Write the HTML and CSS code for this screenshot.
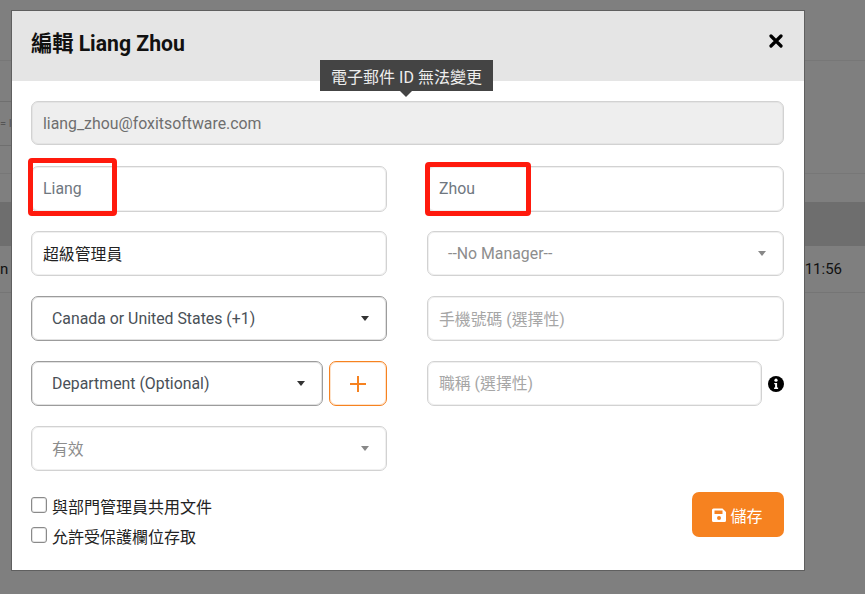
FILE: index.html
```html
<!DOCTYPE html>
<html lang="zh-Hant">
<head>
<meta charset="utf-8">
<title>編輯 Liang Zhou</title>
<link rel="stylesheet" href="styles.css">
</head>
<body>
<div class="backdrop">
  <div class="bg-row bg-r1"></div>
  <div class="bg-filter"><span>= I</span></div>
  <div class="bg-row bg-r4"></div>
  <div class="bg-head"></div>
  <div class="bg-row bg-r5"><span>n</span><span class="bg-time">11:56</span></div>
</div>

<div class="modal">
  <header class="modal-head">
    <h1>編輯 Liang Zhou</h1>
    <svg class="close" viewBox="0 0 14 14" width="14" height="14"><path d="M2 2 12 12M12 2 2 12" stroke="#000" stroke-width="3.2" stroke-linecap="round"/></svg>
  </header>
  <div class="modal-body">
    <div class="field disabled email">liang_zhou@foxitsoftware.com</div>
    <div class="grid">
      <div class="field muted-text lift">Liang</div>
      <div class="field muted-text lift">Zhou</div>

      <div class="field dark-text lift-half">超級管理員</div>
      <div class="field soft-text manager">--No Manager--<i class="caret soft"></i></div>

      <div class="field select strong">Canada or United States (+1)<i class="caret"></i></div>
      <div class="field placeholder lift-half">手機號碼 (選擇性)</div>

      <div class="pair">
        <div class="field select strong grow">Department (Optional)<i class="caret"></i></div>
        <button class="plus" type="button"><svg viewBox="0 0 16 16" width="16" height="16"><path d="M8 0v16M0 8h16" stroke="#f68220" stroke-width="2"/></svg></button>
      </div>
      <div class="pair">
        <div class="field placeholder grow lift">職稱 (選擇性)</div>
        <svg class="info" viewBox="0 0 16 16" width="16" height="16"><circle cx="8" cy="8" r="8" fill="#000"/><circle cx="8" cy="4.2" r="1.6" fill="#fff"/><path d="M6.2 6.9h2.9v4.6h1v1.4H6.1v-1.4h1V8.3h-.9z" fill="#fff"/></svg>
      </div>

      <div class="field select soft-text status">有效<i class="caret soft"></i></div>
    </div>

    <div class="foot">
      <div class="checks">
        <label class="check"><span class="box"></span>與部門管理員共用文件</label>
        <label class="check"><span class="box"></span>允許受保護欄位存取</label>
      </div>
      <button class="save" type="button">
        <svg viewBox="0 0 16 16" width="16" height="16"><path fill-rule="evenodd" d="M2.500 1.500h9L15 5v8.500a1.500 1.500 0 0 1-1.500 1.500h-11A1.500 1.500 0 0 1 1 13.500v-10.500a1.500 1.500 0 0 1 1.500-1.500zM3.500 3.500v3.500h8v-3.500zM8 9a2 2 0 1 0 0 4 2 2 0 0 0 0-4z" fill="#fff"/></svg>
        <span>儲存</span>
      </button>
    </div>
  </div>
</div>

<div class="tooltip">電子郵件 ID 無法變更</div>
<div class="mark mark-left"></div>
<div class="mark mark-right"></div>
</body>
</html>
```

FILE: styles.css
```css
* { box-sizing: border-box; }
html, body { margin: 0; height: 100%; }
body {
  position: relative;
  width: 865px;
  height: 594px;
  overflow: hidden;
  background: #7f7f7f;
  font-family: Roboto, "Noto Sans CJK TC", sans-serif;
  font-size: 15.85px;
}

/* dimmed page behind the dialog */
.backdrop { display: flex; flex-direction: column; height: 100%; padding-top: 60px; color: #111; }
.bg-row { display: flex; align-items: center; justify-content: space-between; font-size: 15px; }
.bg-r1 { height: 41px; border-top: 1px solid #777; }
.bg-filter {
  width: 30px;
  height: 45px;
  border-top: 1px solid #6f6f6f;
  border-bottom: 1px solid #6f6f6f;
  display: flex;
  align-items: center;
  font-size: 11px;
  color: #555;
}
.bg-r4 { height: 56px; margin-top: 27px; border-top: 1px solid #777; margin-bottom: -27px; }
.bg-head { height: 44px; background: #6e6e6e; }
.bg-r5 { height: 47px; border-bottom: 1px solid #757575; }
.bg-time { margin-right: 23px; }

.modal {
  position: absolute;
  left: 11px;
  top: 10px;
  width: 794px;
  height: 561px;
  background: #fff;
  border: 1px solid #5f5f5f;
}
.modal-head {
  height: 70px;
  background: #e5e5e5;
  display: flex;
  justify-content: space-between;
  padding: 19px 21px 0 19px;
}
.modal-head h1 { margin: 0; font-size: 21.2px; line-height: 28px; font-weight: 700; color: #111; }
.close { margin-top: 4px; }

.modal-body { padding: 20px 20px 0 19px; }

.field {
  height: 45px;
  border: 1px solid #d2d2d2;
  box-shadow: inset 0 0 0 1px #f0f0f0;
  border-radius: 7px;
  background: #fff;
  padding: 0 11px;
  display: flex;
  align-items: center;
  position: relative;
  color: #6c757d;
  white-space: nowrap;
}
.lift { padding-bottom: 2px; }
.lift-half { padding-bottom: 1px; }
.status { padding-bottom: 1px; }
.email { height: 44px; background: #eeeeee; color: #6f6f6f; box-shadow: inset 0 0 0 1px #e4e4e4; }
.grid {
  display: grid;
  grid-template-columns: 356px 357px;
  column-gap: 40px;
  row-gap: 20px;
  margin-top: 21px;
}
.grid > .field:first-child, .grid > .field:nth-child(2) { height: 46px; }
.grid > .field:nth-child(3), .grid > .field:nth-child(4) { margin-top: -1px; }
.muted-text { color: #6f7780; }
.dark-text { color: #222; }
.soft-text { color: #8d8d8d; }
.placeholder { color: #a6a6a6; }
.select { padding-left: 20px; }
.manager { padding-left: 20px; }
.strong { border-color: #9c9c9c; box-shadow: inset 0 0 0 1px #e2e2e2; color: #495057; }
.caret {
  position: absolute;
  right: 17px;
  top: 19px;
  width: 0; height: 0;
  border-left: 4.5px solid transparent;
  border-right: 4.5px solid transparent;
  border-top: 5px solid #333;
}
.caret.soft { border-top-color: #888; }
.pair { display: flex; align-items: center; gap: 6px; }
.grow { flex: 1; min-width: 0; }
.plus {
  width: 58px;
  height: 45px;
  padding: 0;
  background: #fff;
  border: 1px solid #f68220;
  box-shadow: inset 0 0 0 1px #fde3cc;
  border-radius: 7px;
  display: flex;
  align-items: center;
  justify-content: center;
}
.info { flex: none; }

.foot { display: flex; justify-content: space-between; align-items: flex-start; margin-top: 21px; }
.checks { display: flex; flex-direction: column; gap: 12px; margin-top: 5px; }
.check { display: flex; align-items: center; gap: 5px; height: 18px; font-size: 16px; color: #222; }
.box { width: 16px; height: 16px; border: 1px solid #8a8a8a; box-shadow: inset 0 0 0 1px #e4e4e4; border-radius: 3px; background: #fff; margin-top: -3px; }
.save {
  width: 92px;
  height: 45px;
  padding: 0 2px 0 0;
  background: #f68220;
  border: 0;
  border-radius: 7px;
  color: #fff;
  font: 400 16px Roboto, "Noto Sans CJK TC", sans-serif;
  display: flex;
  align-items: center;
  justify-content: center;
  gap: 3px;
}

.tooltip {
  position: absolute;
  left: 320px;
  top: 60px;
  width: 173px;
  height: 31px;
  background: #444;
  color: #eee;
  font-size: 16px;
  display: flex;
  align-items: center;
  justify-content: center;
}
.tooltip::after {
  content: "";
  position: absolute;
  left: 80px;
  top: 31px;
  border-left: 6px solid transparent;
  border-right: 6px solid transparent;
  border-top: 6px solid #444;
}

.mark { position: absolute; border: 5px solid #ff1a0d; border-radius: 4px; }
.mark-left { left: 28px; top: 158px; width: 89px; height: 58px; }
.mark-right { left: 425px; top: 162px; width: 106px; height: 54px; }
```
